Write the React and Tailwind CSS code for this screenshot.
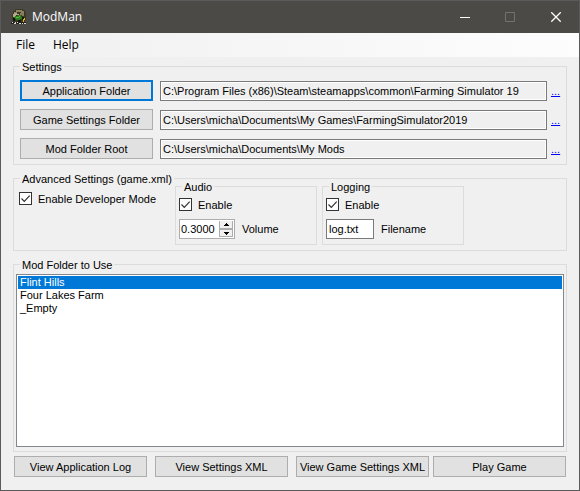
import { useState } from "react";

function TractorIcon() {
  return (
    <svg width="16" height="16" viewBox="0 0 16 16" shapeRendering="crispEdges" aria-hidden="true">
      <path d="M4 0h8v1h2v2h1v8h-1v2H2v-2H1V5h1V2h2z" fill="#3a3a24" />
      <path d="M5 1h6v1h2v2h-3V3H6v1H3V3h2z" fill="#8d8062" />
      <path d="M3 4h3v1h2v1H5v2H2V5h1z" fill="#b7a88a" />
      <path d="M9 4h4v3h-2V6H9z" fill="#8b7a5c" />
      <path d="M4 7h3V6h3v2h1v2H9v1H5v-1H3V8h1z" fill="#2f7d22" />
      <path d="M5 8h3v1H5zM8 7h1v1H8z" fill="#4fc22f" />
      <path d="M2 9h2v3H2zM7 11h3v2H7z" fill="#12140c" />
      <path d="M11 8h2v3h-2z" fill="#15160f" />
      <path d="M12 10h1v3h-1zM13 9h1v2h-1z" fill="#e0b624" />
      <path d="M0 13h15v2H0z" fill="#24231d" />
      <path d="M1 13h1v1H1zM3 14h2v1H3zM6 13h1v1H6zM8 14h2v1H8zM11 14h1v1h-1zM13 14h2v1h-2zM4 13h1v1H4z" fill="#d8d8d4" />
    </svg>
  );
}

function TitleBar() {
  return (
    <header className="flex h-8 shrink-0 items-center bg-[#4b4a47] pl-[10px] text-white">
      <TractorIcon />
      <h1 className="ml-[5px] flex-1 font-['Open_Sans',sans-serif] text-[12px] leading-4">ModMan</h1>
      <button type="button" aria-label="Minimize" className="flex h-full w-[45px] items-center justify-center">
        <svg width="10" height="10" shapeRendering="crispEdges"><path d="M0 5h10v1H0z" fill="#fff" /></svg>
      </button>
      <button type="button" aria-label="Maximize" disabled className="flex h-full w-[45px] items-center justify-center">
        <svg width="10" height="10"><path d="M.5.5h9v9h-9z" fill="none" stroke="#73726f" /></svg>
      </button>
      <button type="button" aria-label="Close" className="flex h-full w-[47px] items-center justify-center">
        <svg width="10" height="10"><path d="M.3.3l9.4 9.4M9.7.3L.3 9.7" stroke="#fff" strokeWidth="1.3" /></svg>
      </button>
    </header>
  );
}

function Group({ title, className = "", bodyClass = "", children }) {
  return (
    <fieldset className={`min-w-0 border border-[#dcdcdc] ${className}`}>
      <legend className="ml-[6px] h-[13px] px-[2px] leading-[15px]">{title}</legend>
      <div className={bodyClass}>{children}</div>
    </fieldset>
  );
}

function PushButton({ focused, className = "", children }) {
  return (
    <button
      type="button"
      className={`h-[21px] min-w-0 whitespace-nowrap bg-[#e1e1e1] pt-px ${focused ? "border-2 border-[#0078d7]" : "border border-[#adadad]"} ${className}`}
    >
      {children}
    </button>
  );
}

function FolderRow({ label, path, focused }) {
  return (
    <div className="flex h-[21px] items-center">
      <PushButton focused={focused} className="w-[133px] shrink-0">{label}</PushButton>
      <input
        aria-label={label}
        readOnly
        value={path}
        className="mt-px ml-[7px] h-5 min-w-0 flex-1 border border-[#7a7a7a] bg-[#f0f0f0] px-[2px] shadow-[inset_0_0_0_1px_#fff] outline-none"
      />
      <a href="#browse" aria-label={`Browse ${label}`} className="ml-1 w-[9px] pt-0.5 text-[#0000ff] underline">...</a>
    </div>
  );
}

function CheckBox({ id, label }) {
  return (
    <div className="flex h-[13px] items-center">
      <span className="grid size-[13px] shrink-0">
        <input
          id={id}
          type="checkbox"
          defaultChecked
          className="peer col-start-1 row-start-1 size-[13px] appearance-none border border-[#333] bg-white"
        />
        <svg width="13" height="13" className="pointer-events-none invisible col-start-1 row-start-1 peer-checked:visible">
          <path d="M2.5 6.5l2.8 2.8L10.7 3.7" fill="none" stroke="#333" strokeWidth="1.2" />
        </svg>
      </span>
      <label htmlFor={id} className="pt-0.5 pl-[6px] whitespace-nowrap">{label}</label>
    </div>
  );
}

function VolumeSpinner() {
  const [volume, setVolume] = useState("0.3000");
  const step = (d) => setVolume((v) => Math.max(0, Number(v) + d).toFixed(4));
  return (
    <div className="flex h-5 w-14 border border-[#adadad] bg-white p-px">
      <input
        id="volume"
        inputMode="decimal"
        value={volume}
        onChange={(e) => setVolume(e.target.value)}
        className="h-4 min-w-0 flex-1 leading-4 outline-none"
      />
      <div className="flex w-[14px] flex-col">
        <button type="button" aria-label="Increase volume" onClick={() => step(0.1)} className="flex h-2 items-center justify-center border border-t-0 border-[#adadad] bg-[#f0f0f0]">
          <svg width="5" height="3" shapeRendering="crispEdges"><path d="M2 0h1v1h1v1h1v1H0V2h1V1h1z" /></svg>
        </button>
        <button type="button" aria-label="Decrease volume" onClick={() => step(-0.1)} className="flex h-2 items-center justify-center border border-[#adadad] bg-[#f0f0f0]">
          <svg width="5" height="3" shapeRendering="crispEdges"><path d="M0 0h5v1H4v1H3v1H2V2H1V1H0z" /></svg>
        </button>
      </div>
    </div>
  );
}

const folders = [
  { label: "Application Folder", path: "C:\\Program Files (x86)\\Steam\\steamapps\\common\\Farming Simulator 19", focused: true },
  { label: "Game Settings Folder", path: "C:\\Users\\micha\\Documents\\My Games\\FarmingSimulator2019" },
  { label: "Mod Folder Root", path: "C:\\Users\\micha\\Documents\\My Mods" },
];

const mods = ["Flint Hills", "Four Lakes Farm", "_Empty"];

export default function App() {
  return (
    <div className="flex h-screen flex-col border border-[#5a5a5a] bg-[#f0f0f0] font-['Liberation_Sans',Arial,sans-serif] text-[11px] leading-[13px] text-black">
      <TitleBar />
      <nav className="flex h-6 shrink-0 items-center bg-linear-to-r from-[#f0f0f0] to-[#fdfdfd] pl-[15px] font-['Open_Sans',sans-serif] text-[12px] leading-4">
        <button type="button">File</button>
        <button type="button" className="ml-[18px]">Help</button>
      </nav>
      <main className="flex min-h-0 flex-1 flex-col px-3 pt-[3px] pb-[13px]">
        <Group title="Settings" bodyClass="flex flex-col gap-2 px-[6px] pt-[7px] pb-[5px]">
          {folders.map((f) => <FolderRow key={f.label} {...f} />)}
        </Group>

        <Group title="Advanced Settings (game.xml)" className="mt-[7px]" bodyClass="pb-[5px] pl-[5px]">
          <div className="-mt-[5px] flex items-start">
            <div className="w-[156px] pt-3">
              <CheckBox id="dev-mode" label="Enable Developer Mode" />
            </div>
            <Group title="Audio" className="w-[142px]" bodyClass="flex flex-col gap-2 px-[3px] pt-[5px] pb-[5px]">
              <CheckBox id="audio-enable" label="Enable" />
              <div className="flex items-center gap-[7px]">
                <VolumeSpinner />
                <label htmlFor="volume">Volume</label>
              </div>
            </Group>
            <Group title="Logging" className="ml-[5px] w-[142px]" bodyClass="flex flex-col gap-2 px-[3px] pt-[5px] pb-[5px]">
              <CheckBox id="logging-enable" label="Enable" />
              <div className="flex items-center gap-[7px]">
                <input id="filename" defaultValue="log.txt" className="h-5 w-12 border border-[#7a7a7a] bg-white px-[2px] outline-none" />
                <label htmlFor="filename">Filename</label>
              </div>
            </Group>
          </div>
        </Group>

        <Group title="Mod Folder to Use" className="mt-[7px] flex-1" bodyClass="flex h-full flex-col px-[2px] pt-[3px] pb-1">
          <select
            size={12}
            aria-label="Mod Folder to Use"
            defaultValue="Flint Hills"
            className="w-full flex-1 overflow-hidden border border-[#828790] bg-white p-px text-[11px] outline-none"
          >
            {mods.map((m) => (
              <option key={m} className="h-[13px] min-h-0 p-0 px-[2px] leading-[15px] text-black checked:bg-[#0078d7] checked:text-white">{m}</option>
            ))}
          </select>
        </Group>

        <div className="mt-1 flex gap-2 px-px">
          <PushButton className="flex-1">View Application Log</PushButton>
          <PushButton className="flex-1">View Settings XML</PushButton>
          <PushButton className="flex-1">View Game Settings XML</PushButton>
          <PushButton className="-ml-1 flex-1">Play Game</PushButton>
        </div>
      </main>
    </div>
  );
}
